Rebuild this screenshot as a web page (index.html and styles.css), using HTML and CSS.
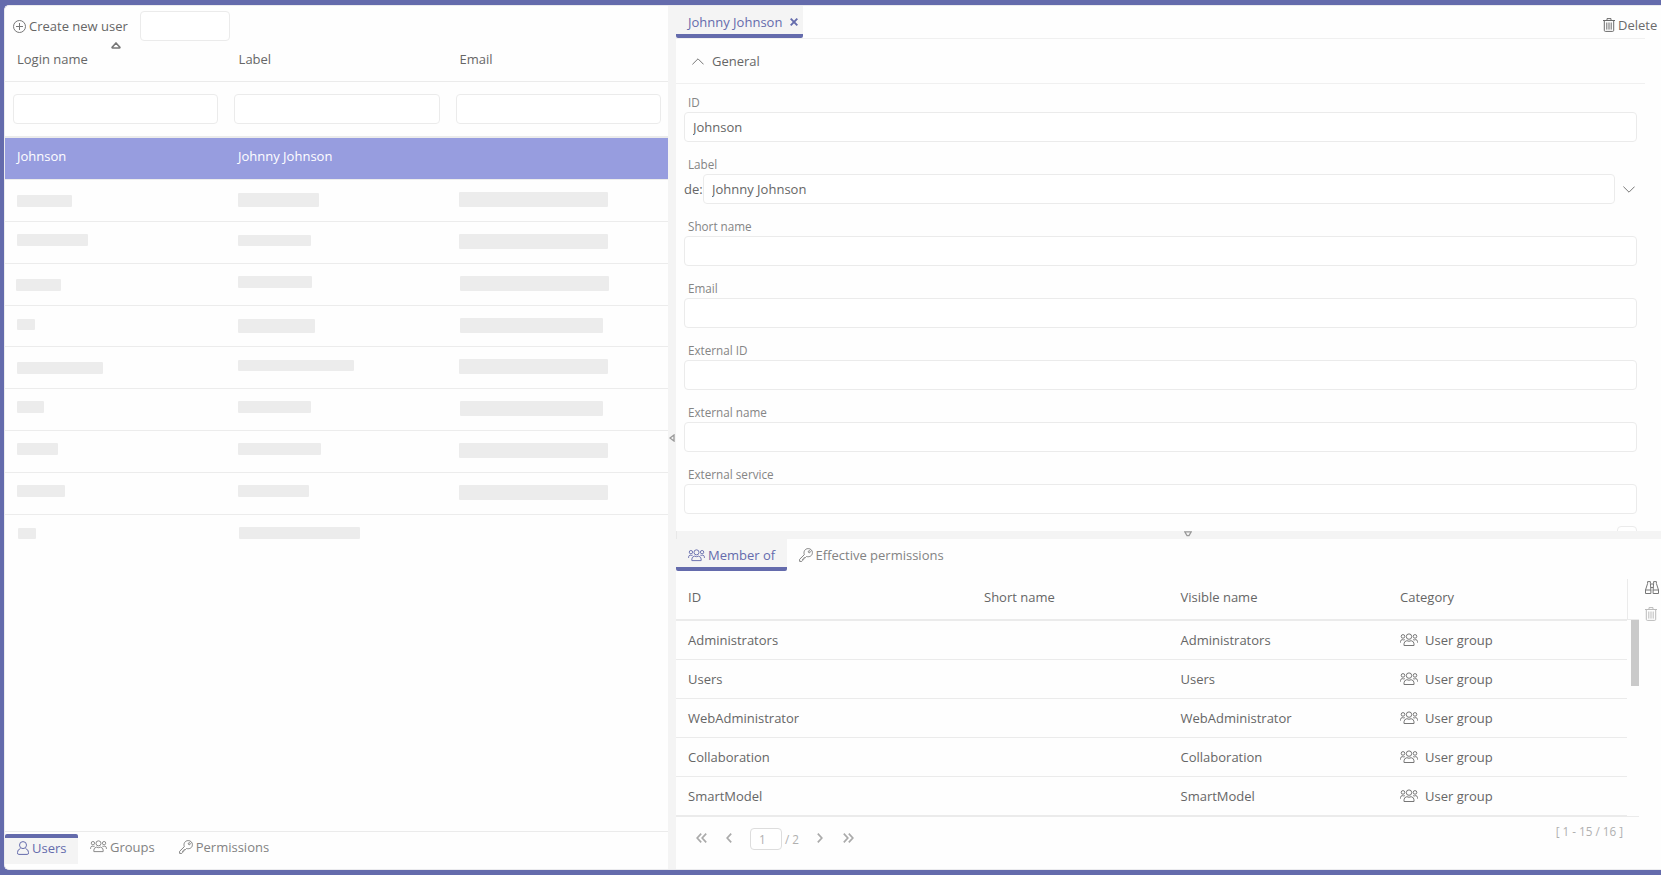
FILE: index.html
```
<!DOCTYPE html>
<html lang="en">
<head>
<meta charset="utf-8">
<title>User management</title>
<link rel="stylesheet" href="styles.css">
</head>
<body>
<svg class="defs" aria-hidden="true">
  <symbol id="group" viewBox="0 0 18 14">
    <g fill="none" stroke="currentColor" stroke-width="1">
      <circle cx="9" cy="3.6" r="2.7"/><circle cx="3" cy="3.4" r="1.8"/><circle cx="15" cy="3.4" r="1.8"/>
      <path d="M4 12.5V10.8Q4 8.3 6.8 7.7Q9 8.8 11.2 7.7Q14 8.3 14 10.8V12.5ZM.5 9.6V8.4Q.7 6.9 2.2 6.6Q3.4 7.2 4.8 6.7M17.5 9.6V8.4Q17.3 6.9 15.8 6.6Q14.6 7.2 13.2 6.7"/>
    </g>
  </symbol>
  <symbol id="user" viewBox="0 0 12 14">
    <g fill="none" stroke="currentColor" stroke-width="1">
      <circle cx="6" cy="4.1" r="3.5"/>
      <path d="M3.4 7.6Q.5 8.5.5 11.4V12Q.5 13.4 1.8 13.4H10.2Q11.5 13.4 11.5 12V11.4Q11.5 8.5 8.6 7.6"/>
    </g>
  </symbol>
  <symbol id="key" viewBox="0 0 14 14">
    <g fill="none" stroke="currentColor" stroke-width="1">
      <path d="M5.3 6.7C4.2 3.3 6.2.6 9.2.6C11.6.6 13.4 2.3 13.4 4.7C13.4 7.6 10.7 9.4 7.5 8.5L6.2 9.8H4.9V11.2H3.6V12.6L2.8 13.4H.6V11.3Z"/>
      <circle cx="10.3" cy="3.7" r="1"/>
    </g>
  </symbol>
  <symbol id="trash" viewBox="0 0 12 14">
    <g fill="none" stroke="currentColor" stroke-width="1">
      <path d="M0 2.5H12M4 2.2V.6H8V2.2M1.3 2.5V12.3Q1.3 13.4 2.3 13.4H9.7Q10.7 13.4 10.7 12.3V2.5M3.8 4.5V11.6M6 4.5V11.6M8.2 4.5V11.6"/>
    </g>
  </symbol>
  <symbol id="chev" viewBox="0 0 12 7">
    <path d="M.4 6.4L6 .8L11.6 6.4" fill="none" stroke="currentColor"/>
  </symbol>
  <symbol id="single" viewBox="0 0 6 10">
    <path d="M5.2.7L1.2 5L5.2 9.3" fill="none" stroke="currentColor" stroke-width="1.7"/>
  </symbol>
  <symbol id="double" viewBox="0 0 11 10">
    <path d="M5.2.7L1.2 5L5.2 9.3M10.2.7L6.2 5L10.2 9.3" fill="none" stroke="currentColor" stroke-width="1.7"/>
  </symbol>
  <symbol id="tri" viewBox="0 0 10 7">
    <path d="M5 1L8.8 5.1Q9.2 6 8.4 6H1.6Q.8 6 1.2 5.1Z" fill="none" stroke="currentColor" stroke-width="1.6"/>
  </symbol>
</svg>

<div class="app">
  <section class="users">
    <div class="toolbar">
      <svg class="plus" viewBox="0 0 13 13"><g fill="none" stroke="currentColor"><circle cx="6.5" cy="6.5" r="6"/><path d="M6.5 3V10M3 6.5H10"/></g></svg>
      <span>Create new user</span>
      <input class="box quick" aria-label="Quick filter">
      <svg class="sort"><use href="#tri"/></svg>
    </div>
    <div class="ugrid uhead"><span>Login name</span><span>Label</span><span>Email</span></div>
    <div class="ufilter"><input class="box" aria-label="Login name"><input class="box" aria-label="Label"><input class="box" aria-label="Email"></div>
    <div class="ugrid urow selected"><span>Johnson</span><span>Johnny Johnson</span><span></span></div>
    <div class="ugrid urow"><i style="--t:15px;--w:55px;--h:12px"></i><i style="--t:13px;--w:81px;--h:14px"></i><i style="--t:12px;--w:149px;--h:15px"></i></div>
    <div class="ugrid urow"><i style="--t:12px;--w:71px;--h:12px"></i><i style="--t:13px;--w:73px;--h:11px"></i><i style="--t:12px;--w:149px;--h:15px"></i></div>
    <div class="ugrid urow"><i style="--t:15px;--w:45px;--h:12px;--x:-1px"></i><i style="--t:12px;--w:74px;--h:12px"></i><i style="--t:12px;--w:149px;--h:15px;--x:1px"></i></div>
    <div class="ugrid urow short"><i style="--t:13px;--w:18px;--h:11px"></i><i style="--t:13px;--w:77px;--h:14px"></i><i style="--t:12px;--w:143px;--h:15px;--x:1px"></i></div>
    <div class="ugrid urow"><i style="--t:15px;--w:86px;--h:12px"></i><i style="--t:13px;--w:116px;--h:11px"></i><i style="--t:12px;--w:149px;--h:15px"></i></div>
    <div class="ugrid urow"><i style="--t:12px;--w:27px;--h:12px"></i><i style="--t:12px;--w:73px;--h:12px"></i><i style="--t:12px;--w:143px;--h:15px;--x:1px"></i></div>
    <div class="ugrid urow"><i style="--t:12px;--w:41px;--h:12px"></i><i style="--t:12px;--w:83px;--h:12px"></i><i style="--t:12px;--w:149px;--h:15px"></i></div>
    <div class="ugrid urow"><i style="--t:12px;--w:48px;--h:12px"></i><i style="--t:12px;--w:71px;--h:12px"></i><i style="--t:12px;--w:149px;--h:15px"></i></div>
    <div class="ugrid urow last"><i style="--t:13px;--w:18px;--h:11px;--x:1px"></i><i style="--t:12px;--w:121px;--h:12px;--x:1px"></i></div>
    <nav class="btabs">
      <a class="on"><svg class="i-user"><use href="#user"/></svg><span>Users</span></a>
      <a class="groups"><svg class="i-group"><use href="#group"/></svg><span>Groups</span></a>
      <a class="perms"><svg class="i-key"><use href="#key"/></svg><span>Permissions</span></a>
    </nav>
  </section>

  <div class="vsplit"><svg viewBox="0 0 6 8"><path d="M5 1V7L1 4Z" fill="none" stroke="currentColor" stroke-width="1.3"/></svg></div>

  <main class="detail">
    <header class="dhead">
      <div class="dtab"><span>Johnny Johnson</span><svg viewBox="0 0 8 8"><path d="M.7.7L7.3 7.3M7.3.7L.7 7.3" stroke="currentColor" stroke-width="1.9"/></svg></div>
      <div class="del"><svg class="i-trash"><use href="#trash"/></svg><span>Delete</span></div>
    </header>
    <div class="form">
      <div class="section"><svg class="i-chev"><use href="#chev"/></svg><span>General</span></div>
      <div class="field"><label>ID</label><input class="box" value="Johnson"></div>
      <div class="field"><label>Label</label><div class="lang"><span>de:</span><input class="box" value="Johnny Johnson"><svg class="i-chev down"><use href="#chev"/></svg></div></div>
      <div class="field"><label>Short name</label><input class="box"></div>
      <div class="field"><label>Email</label><input class="box"></div>
      <div class="field"><label>External ID</label><input class="box"></div>
      <div class="field"><label>External name</label><input class="box"></div>
      <div class="field"><label>External service</label><input class="box"></div>
      <div class="box check"></div>
    </div>
    <div class="hsplit"><svg viewBox="0 0 8 6"><path d="M.8.8H7.2L5 4.6H3Z" fill="none" stroke="currentColor" stroke-width="1.3"/></svg></div>
    <nav class="mtabs">
      <a class="on"><svg class="i-group"><use href="#group"/></svg><span>Member of</span></a>
      <a><svg class="i-key"><use href="#key"/></svg><span>Effective permissions</span></a>
    </nav>
    <div class="mbody">
      <div class="mtable">
        <div class="mgrid mhead"><span>ID</span><span>Short name</span><span>Visible name</span><span>Category</span></div>
        <div class="mscroll">
          <div class="mrows">
            <div class="mgrid"><span>Administrators</span><span></span><span>Administrators</span><span class="cat"><svg class="i-group"><use href="#group"/></svg>User group</span></div>
            <div class="mgrid"><span>Users</span><span></span><span>Users</span><span class="cat"><svg class="i-group"><use href="#group"/></svg>User group</span></div>
            <div class="mgrid"><span>WebAdministrator</span><span></span><span>WebAdministrator</span><span class="cat"><svg class="i-group"><use href="#group"/></svg>User group</span></div>
            <div class="mgrid"><span>Collaboration</span><span></span><span>Collaboration</span><span class="cat"><svg class="i-group"><use href="#group"/></svg>User group</span></div>
            <div class="mgrid"><span>SmartModel</span><span></span><span>SmartModel</span><span class="cat"><svg class="i-group"><use href="#group"/></svg>User group</span></div>
          </div>
          <div class="thumb"></div>
        </div>
        <footer class="pager">
          <svg class="p2"><use href="#double"/></svg>
          <svg class="p1"><use href="#single"/></svg>
          <input class="box page" value="1" aria-label="Page"><span class="of">/ 2</span>
          <svg class="p1 flip"><use href="#single"/></svg>
          <svg class="p2 flip"><use href="#double"/></svg>
          <span class="range">[ 1 - 15 / 16 ]</span>
        </footer>
      </div>
      <aside class="tools">
        <svg class="bino" viewBox="0 0 14 13"><g fill="none" stroke="currentColor"><path d="M.5 9L2.6 2.5V.6H5.4V2.5L5.9 9.2M13.5 9L11.4 2.5V.6H8.6V2.5L8.1 9.2M.5 9H5.9V12.5H.5ZM8.1 9H13.5V12.5H8.1ZM5.5 3H8.5M5.8 6.5H8.2"/></g></svg>
        <svg class="i-trash dim"><use href="#trash"/></svg>
      </aside>
    </div>
  </main>
</div>
</body>
</html>
```
FILE: styles.css
```
* { box-sizing: border-box; }
body {
  margin: 0;
  width: 1661px;
  height: 875px;
  overflow: hidden;
  padding: 5px 0 5px 4px;
  background: #646bac;
  font: 13px/18px "Open Sans", sans-serif;
  color: #666;
}
.defs { position: absolute; width: 0; height: 0; }
svg { display: block; flex: none; }
input { font: inherit; color: inherit; outline: none; margin: 0; min-width: 0; }
.box { border: 1px solid #ebebeb; border-radius: 4px; background: #fff; height: 30px; padding: 0 8px; }

.app {
  display: flex;
  height: 865px;
  background: #fefefe;
  border: solid #ebebee;
  border-width: 1px 0 1px 1px;
  border-radius: 5px 0 0 5px;
  overflow: hidden;
}

/* user list */
.users { width: 663px; display: flex; flex-direction: column; }
.toolbar { position: relative; height: 40px; display: flex; align-items: center; padding-left: 8px; }
.plus { width: 13px; height: 13px; margin-right: 3px; color: #777; }
.toolbar span { width: 111px; }
.quick { width: 90px; }
.sort { position: absolute; left: 106px; top: 36px; width: 10px; height: 7px; color: #777; }
.ugrid { display: grid; grid-template-columns: 221px 221px 1fr; padding-left: 12px; }
.uhead { height: 36px; padding-top: 4px; border-bottom: 1px solid #ebebeb; }
.uhead span + span { padding-left: .6px; }
.ufilter { display: grid; grid-template-columns: 205px 206px 205px; column-gap: 16px; height: 56px; padding: 12px 0 0 8px; border-bottom: 2px solid #ebebeb; }
.urow { height: 42px; border-bottom: 1px solid #ececec; flex: none; }
.urow.short { height: 41px; }
.urow.last { border: 0; }
.selected { background: #979ddf; color: #fff; padding-top: 9px; }
.urow i { display: block; width: var(--w); height: var(--h); margin: var(--t) 0 0 var(--x, 0); background: #ececec; border-radius: 1px; }
.btabs { margin-top: auto; height: 38px; border-top: 1px solid #ebebeb; display: flex; align-items: flex-start; color: #838383; }
.btabs a { display: flex; align-items: center; height: 29px; gap: 3px; }
.btabs .on { width: 73px; padding: 0 0 7px 12px; border-top: 4px solid #646bac; border-radius: 2px 2px 0 0; background: #f4f4f4; color: #646bac; margin-top: 2px; height: 30px; }
.btabs .groups { margin-left: 12px; }
.btabs .perms { margin-left: 24px; }
.i-user { width: 12px; height: 14px; }
.i-group { width: 17px; height: 13px; }
.i-key { width: 14px; height: 14px; }
.i-trash { width: 12px; height: 14px; }

.vsplit { width: 8px; background: #f4f4f4; color: #999; padding-left: 1px; }
.vsplit svg { width: 6px; height: 8px; margin-top: 428px; }

/* detail */
.detail { flex: 1; display: flex; flex-direction: column; }
.dhead { display: flex; justify-content: space-between; height: 32px; }
.dtab { display: flex; align-items: center; width: 127px; height: 32px; padding: 3px 0 0 12px; gap: 8px; background: #f4f4f4; color: #646bac; border-bottom: 4px solid #646bac; border-radius: 0 0 2px 2px; }
.dtab svg { width: 8px; height: 8px; margin-top: 1px; }
.del { display: flex; align-items: center; gap: 3px; width: 58px; padding-top: 6px; color: #6b6b6b; }
.form { height: 493px; overflow: hidden; }
.section { width: 969px; height: 46px; border: solid #f0f0f0; border-width: 1px 0; display: flex; align-items: center; gap: 8px; padding: 0 0 0 16px; }
.i-chev { width: 12px; height: 7px; color: #777; }
.down { transform: scaleY(-1); }
.field { width: 961px; height: 62px; padding: 9px 0 0 8px; }
.field label { display: block; height: 19px; padding-left: 4px; font-size: 11.7px; color: #858585; }
.field > .box { display: block; width: 953px; }
.lang { display: flex; align-items: center; }
.lang span { width: 19px; }
.lang .box { width: 912px; margin-right: 8px; }
.check { width: 20px; margin: 8px 0 0 941px; }
.hsplit { height: 8px; background: #f4f4f4; color: #999; border-left: 1px solid #e8e8e8; padding-left: 507px; }
.hsplit svg { width: 8px; height: 6px; }
.mtabs { display: flex; height: 32px; color: #838383; flex: none; white-space: nowrap; }
.mtabs a { display: flex; align-items: center; gap: 2.5px; padding: 0 12px; }
.mtabs .on { width: 111px; gap: 3px; padding-right: 0; background: #f4f4f4; color: #646bac; border-bottom: 4px solid #646bac; border-radius: 0 0 2px 2px; padding-top: 4px; }
.mbody { display: flex; flex: 1; padding-top: 8px; }
.mtable { width: 963px; }
.mgrid { display: grid; grid-template-columns: 296px 196.5px 219.5px 1fr; align-items: center; width: 951px; height: 39px; padding-left: 12px; border-bottom: 1px solid #ebebeb; }
.mhead { width: 952px; height: 40px; border-bottom: 0; border-right: 1px solid #ebebeb; padding-bottom: 4px; }
.mscroll { display: flex; justify-content: space-between; border: solid #ebebeb; border-width: 1px 0; height: 198px; }
.mrows { padding-top: 1px; box-shadow: inset 0 1px #ebebeb; }
.thumb { width: 8px; height: 66px; background: #cacaca; }
.cat { display: flex; align-items: center; gap: 7px; }
.cat .i-group { width: 18px; height: 14px; color: #777; }
.pager { display: flex; align-items: flex-start; padding: 16px 16px 0 20px; color: #b0b0b0; font-size: 11.7px; }
.p1 { width: 6px; height: 10px; }
.p2 { width: 11px; height: 10px; }
.pager svg { color: #aaa; }
.pager .p1 { margin-left: 19px; }
.flip { transform: scaleX(-1); }
.page { width: 32px; height: 22px; margin: -5px 3px 0 18px; padding: 0 8px; border-color: #ddd; }
.pager .p1.flip { margin-left: 14px; }
.pager .p2.flip { margin-left: 20px; }
.of { width: 18px; margin-top: -3px; }
.range { margin: -11px 0 0 auto; }
.tools { padding: 2px 0 0 6px; display: flex; flex-direction: column; gap: 13px; color: #777; }
.bino { width: 14px; height: 13px; }
.dim { color: #bbb; }
```
